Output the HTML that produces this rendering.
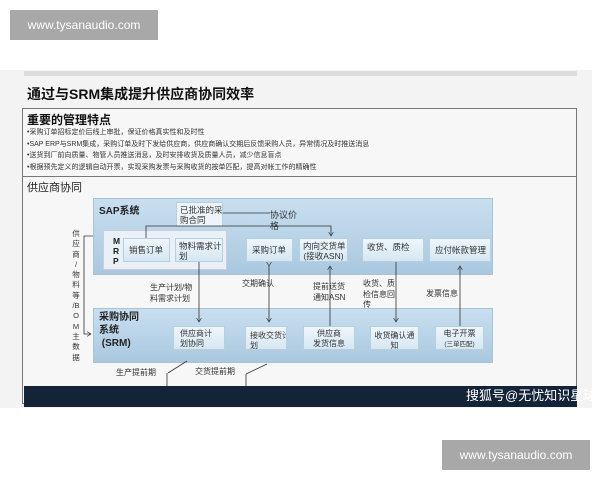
<!DOCTYPE html>
<html><head><meta charset="utf-8"><style>
*{margin:0;padding:0;box-sizing:border-box}
body{width:600px;height:480px;background:#fff;position:relative;overflow:hidden;font-family:"Liberation Sans","Noto Sans CJK SC",sans-serif;color:#222}
.a{position:absolute}
.badge{position:absolute;background:#a8a8a8;color:#fff;font-size:12px;line-height:30px;text-align:center;width:148px;height:30px}
.bx{position:absolute;background:linear-gradient(#eef6fb,#d6e7f2);border:1px solid #b8cfdd;font-size:8.5px;color:#333;line-height:10px;padding:2px 3px;white-space:nowrap;overflow:hidden}
.t{position:absolute;font-size:8px;line-height:10.5px;color:#333;white-space:nowrap}
</style></head><body>
<div class="badge" style="left:10px;top:10px">www.tysanaudio.com</div>
<div class="a" style="left:0;top:70px;width:592px;height:338px;background:#f3f3f3"></div>
<div class="a" style="left:24px;top:71px;width:553px;height:5px;background:#dcdcdc"></div>
<div class="a" style="left:27px;top:84px;font-size:14px;font-weight:bold;color:#111">通过与SRM集成提升供应商协同效率</div>
<div class="a" style="left:22px;top:108px;width:555px;height:296px;border:1px solid #777;background:#f7f7f7"></div>
<div class="a" style="left:22px;top:176px;width:555px;height:1px;background:#777"></div>
<div class="a" style="left:27px;top:111px;font-size:12px;font-weight:bold;color:#111">重要的管理特点</div>
<div class="a" style="left:27px;top:127px;font-size:7px;line-height:11.5px;color:#333;white-space:nowrap">•采购订单招标定价后线上审批，保证价格真实性和及时性<br>•SAP ERP与SRM集成，采购订单及时下发给供应商，供应商确认交期后反馈采购人员，异常情况及时推送消息<br>•送货到厂前向质量、物管人员推送消息，及时安排收货及质量人员，减少信息盲点<br>•根据预先定义的逻辑自动开票，实现采购发票与采购收货的按单匹配，提高对帐工作的精确性</div>
<div class="a" style="left:27px;top:179px;font-size:11px;color:#222">供应商协同</div>
<div class="a" style="left:93px;top:198px;width:400px;height:77px;background:linear-gradient(#c9dff0,#a9c8df);border:1px solid #a9c3d6"></div>
<div class="a" style="left:99px;top:202px;font-size:10px;font-weight:bold">SAP系统</div>
<div class="a" style="left:93px;top:308px;width:400px;height:55px;background:linear-gradient(#c9dff0,#a9c8df);border:1px solid #a9c3d6"></div>
<div class="a" style="left:99px;top:311px;font-size:10px;font-weight:bold;line-height:13px;white-space:nowrap">采购协同<br>系统<br>&nbsp;(SRM)</div>
<div class="a" style="left:103px;top:230px;width:124px;height:40px;background:#eaf1f6;border:1px solid #ccd"></div>
<div class="a" style="left:113px;top:236px;font-size:8.5px;font-weight:bold;line-height:10px">M<br>R<br>P</div>
<div class="bx" style="left:176px;top:202px;width:47px;height:25px;background:#eef5fa">已批准的采<br>购合同</div>
<div class="t" style="left:270px;top:210px;font-size:9px">协议价<br>格</div>
<div class="bx" style="left:123px;top:238px;width:47px;height:24px;line-height:18px;padding:2px 5px">销售订单</div>
<div class="bx" style="left:175px;top:238px;width:48px;height:24px">物料需求计<br>划</div>
<div class="bx" style="left:246px;top:238px;width:47px;height:24px;line-height:18px;padding:2px 5px">采购订单</div>
<div class="bx" style="left:299px;top:238px;width:49px;height:24px;text-align:center">内向交货单<br>(接收ASN)</div>
<div class="bx" style="left:362px;top:238px;width:62px;height:24px;padding:3px 4px">收货、质检</div>
<div class="bx" style="left:429px;top:238px;width:62px;height:24px;line-height:18px;padding:2px 5px">应付帐款管理</div>
<div class="bx" style="left:173px;top:326px;width:52px;height:24px;padding:2px 6px;font-size:8px">供应商计<br>划协同</div>
<div class="bx" style="left:245px;top:326px;width:42px;height:24px;padding:4px 4px;font-size:8px">接收交货计<br>划</div>
<div class="bx" style="left:303px;top:326px;width:52px;height:24px;font-size:8px;text-align:center">供应商<br>发货信息</div>
<div class="bx" style="left:370px;top:326px;width:49px;height:24px;padding:4px 2px;font-size:8px;text-align:center">收货确认通<br>知</div>
<div class="bx" style="left:435px;top:326px;width:49px;height:24px;font-size:8px;text-align:center">电子开票<br><span style="font-size:6.5px">(三单匹配)</span></div>
<div class="t" style="left:70px;top:229px;width:12px;font-size:7.5px;line-height:10.3px;text-align:center">供<br>应<br>商<br>/<br>物<br>料<br>等<br>/B<br>O<br>M<br>主<br>数<br>据</div>
<div class="t" style="left:150px;top:283px">生产计划/物<br>料需求计划</div>
<div class="t" style="left:242px;top:279px">交期确认</div>
<div class="t" style="left:313px;top:282px">提前送货<br>通知ASN</div>
<div class="t" style="left:363px;top:279px">收货、质<br>检信息回<br>传</div>
<div class="t" style="left:426px;top:289px">发票信息</div>
<div class="t" style="left:116px;top:368px">生产提前期</div>
<div class="t" style="left:195px;top:367px">交货提前期</div>
<svg class="a" style="left:0;top:0" width="600" height="480" fill="none" stroke="#333" stroke-width="0.8">
<defs><marker id="m" markerWidth="6" markerHeight="6" refX="5" refY="3" orient="auto"><path d="M0,0L5,3L0,6" stroke="#333"/></marker></defs>
<path d="M223,213H270"/>
<path d="M146,238V226H331V236" marker-end="url(#m)"/>
<path d="M199,262V322" marker-end="url(#m)"/>
<path d="M269,266V322" marker-end="url(#m)" marker-start="url(#m)"/>
<path d="M330,326V266" marker-end="url(#m)"/>
<path d="M396,262V322" marker-end="url(#m)"/>
<path d="M460,326V266" marker-end="url(#m)"/>
<path d="M93,236H84V334H91" marker-end="url(#m)"/>
<path d="M168,373L187,361M167,373V386M246,374L267,364M246,374V386"/>
</svg>
<div class="a" style="left:24px;top:386px;width:553px;height:21px;background:#142438"></div>
<div class="a" style="left:466px;top:385px;font-size:13px;color:#fff;white-space:nowrap">搜狐号@无忧知识星球</div>
<div class="badge" style="left:442px;top:440px">www.tysanaudio.com</div>
</body></html>
